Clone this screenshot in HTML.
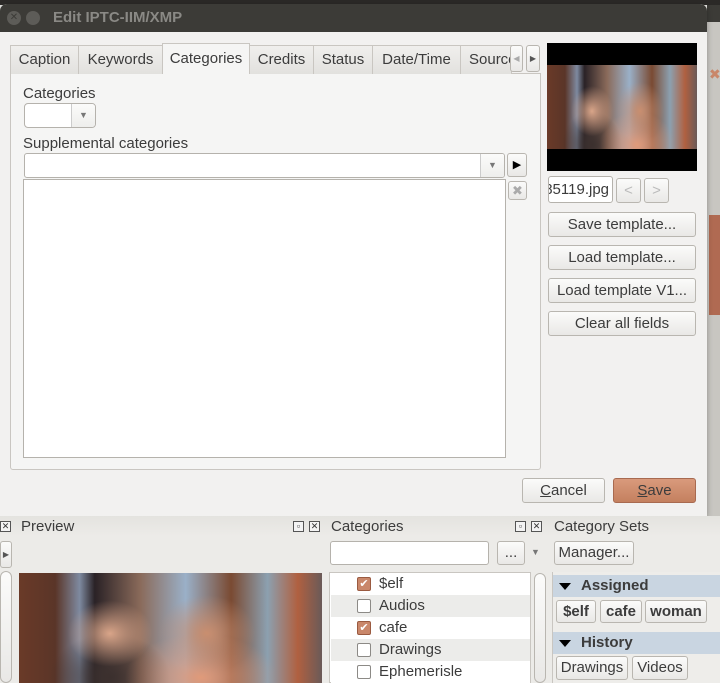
<!DOCTYPE html>
<html><head><style>
*{box-sizing:border-box;margin:0;padding:0}
body{width:720px;height:683px;overflow:hidden;background:#e6e5e1;font-family:"Liberation Sans","DejaVu Sans",sans-serif;font-size:15px;color:#3c3c3c;position:relative}
.a{position:absolute}
.btn{position:absolute;border:1px solid #b9b6b0;border-radius:3px;background:linear-gradient(#fbfbfa,#e9e8e6);text-align:center;font-size:15px;color:#3c3c3c}
.tab{position:absolute;top:45px;height:29px;border:1px solid #c9c6c1;border-bottom:none;background:linear-gradient(#f0efed,#e2e1de);font-size:15px;line-height:28px;text-align:center;color:#3c3c3c;overflow:hidden;white-space:nowrap}
.field{position:absolute;background:#fff;border:1px solid #b5b2ac;border-radius:3px;overflow:hidden}
.photo{background:
radial-gradient(ellipse 14% 30% at 30% 55%,#d9a589,transparent),
radial-gradient(ellipse 16% 35% at 62% 55%,#c98e6f,transparent),
radial-gradient(ellipse 25% 40% at 60% 95%,#e09a7a,transparent),
radial-gradient(ellipse 20% 40% at 30% 95%,#3b302e,transparent),
linear-gradient(90deg,#6a3a28 0%,#5a3528 12%,#7e8aa0 20%,#2a2226 25%,#8a6a5a 40%,#9ab0c8 55%,#7a4a32 70%,#8ca0b0 82%,#b06040 92%,#6a5a58 100%)}
.row{position:absolute;left:331px;width:199px;height:22px;font-size:15px;line-height:22px;padding-left:48px}
.cb{position:absolute;left:26px;top:4px;width:14px;height:14px;border:1px solid #8c8a86;border-radius:2px;background:#fff}
.cb.on{background:#c9876a;border-color:#9a5a40;color:#fff;font-size:11px;line-height:12px;text-align:center}
.chip{position:absolute;border:1px solid #b9b6b0;border-radius:3px;background:linear-gradient(#fbfbfa,#e9e8e6);font-size:15px;text-align:center;line-height:21px}
.sec{position:absolute;left:553px;width:167px;height:22px;background:#c9d5e1;font-weight:bold;font-size:15px;line-height:22px;padding-left:28px}
.sec:before{content:"";position:absolute;left:6px;top:8px;border-left:6px solid transparent;border-right:6px solid transparent;border-top:7px solid #000}
.ic{position:absolute;width:11px;height:11px;border:1px solid #555;font-size:9px;line-height:9px;text-align:center;color:#333;background:#f3f3f3}
</style></head><body>
<div class="a" style="left:0;top:0;width:720px;height:5px;background:#2b2927"></div>
<div class="a" style="left:707px;top:5px;width:13px;height:515px;background:#c8c6c1"></div>
<div class="a" style="left:707px;top:5px;width:13px;height:17px;background:#3c3b37"></div>
<div class="a" style="left:709px;top:66px;color:#c9876a;font-size:14px;font-weight:bold">✖</div>
<div class="a" style="left:709px;top:215px;width:11px;height:100px;background:#b06a52"></div>
<div class="a" style="left:0;top:4px;width:707px;height:512px;background:#f2f1f0;border-radius:7px 7px 0 0;overflow:hidden;box-shadow:0 2px 6px rgba(0,0,0,.3)">
 <div class="a" style="left:0;top:0;width:707px;height:28px;background:#3c3b37"></div>
 <div class="a" style="left:7px;top:7px;width:14px;height:14px;border-radius:50%;background:#5d5c58;color:#3c3b37;font-size:10px;line-height:14px;text-align:center">✕</div>
 <div class="a" style="left:26px;top:7px;width:14px;height:14px;border-radius:50%;background:#5d5c58"></div>
 <div class="a" style="left:53px;top:5px;color:#8a8985;font-weight:bold;font-size:15px">Edit IPTC-IIM/XMP</div>
</div>
<div class="a" style="left:10px;top:73px;width:531px;height:397px;background:#f5f5f4;border:1px solid #c9c6c1;border-radius:0 0 3px 3px"></div>
<div class="tab" style="left:10px;width:69px">Caption</div>
<div class="tab" style="left:78px;width:85px">Keywords</div>
<div class="tab" style="left:249px;width:65px">Credits</div>
<div class="tab" style="left:313px;width:60px">Status</div>
<div class="tab" style="left:372px;width:89px">Date/Time</div>
<div class="tab" style="left:460px;width:52px;text-align:left;padding-left:8px">Source</div>
<div class="tab" style="left:162px;top:43px;height:31px;width:88px;background:#f5f5f4;line-height:29px">Categories</div>
<div class="btn" style="left:510px;top:45px;width:13px;height:27px;font-size:8px;line-height:26px;color:#aaa">◀</div>
<div class="btn" style="left:526px;top:45px;width:14px;height:27px;font-size:8px;line-height:26px;color:#555">▶</div>
<div class="a" style="left:23px;top:85px">Categories</div>
<div class="field" style="left:24px;top:103px;width:72px;height:25px;border-radius:4px"><div class="a" style="left:46px;top:0;width:24px;height:23px;border-left:1px solid #ccc;background:linear-gradient(#fbfbfa,#eeeeec);font-size:9px;line-height:23px;text-align:center;color:#777">▼</div></div>
<div class="a" style="left:23px;top:135px">Supplemental categories</div>
<div class="field" style="left:24px;top:153px;width:481px;height:25px"><div class="a" style="left:455px;top:0;width:24px;height:23px;border-left:1px solid #ccc;background:linear-gradient(#fbfbfa,#eeeeec);font-size:9px;line-height:23px;text-align:center;color:#777">▼</div></div>
<div class="btn" style="left:507px;top:153px;width:20px;height:24px;font-size:11px;line-height:22px;color:#000">▶</div>
<div class="field" style="left:23px;top:179px;width:483px;height:279px;border-radius:0"></div>
<div class="btn" style="left:508px;top:181px;width:19px;height:19px;font-size:13px;line-height:17px;color:#aaa">✖</div>
<div class="a" style="left:547px;top:43px;width:150px;height:128px;background:#000"></div>
<div class="a photo" style="left:547px;top:65px;width:150px;height:84px"></div>
<div class="field" style="left:548px;top:176px;width:65px;height:27px;font-size:15px;line-height:25px"><span class="a" style="right:3px;top:0;white-space:nowrap">3_185119.jpg</span></div>
<div class="btn" style="left:616px;top:178px;width:25px;height:25px;line-height:23px;color:#bbb">&lt;</div>
<div class="btn" style="left:644px;top:178px;width:25px;height:25px;line-height:23px;color:#bbb">&gt;</div>
<div class="btn" style="left:548px;top:212px;width:148px;height:25px;line-height:23px">Save template...</div>
<div class="btn" style="left:548px;top:245px;width:148px;height:25px;line-height:23px">Load template...</div>
<div class="btn" style="left:548px;top:278px;width:148px;height:25px;line-height:23px">Load template V1...</div>
<div class="btn" style="left:548px;top:311px;width:148px;height:25px;line-height:23px">Clear all fields</div>
<div class="btn" style="left:522px;top:478px;width:83px;height:25px;line-height:23px"><u>C</u>ancel</div>
<div class="btn" style="left:613px;top:478px;width:83px;height:25px;line-height:23px;background:linear-gradient(#d99a7c,#c4805f);border-color:#a86a50"><u>S</u>ave</div>
<div class="a" style="left:0;top:516px;width:720px;height:167px;background:linear-gradient(#e4e3df,#ecebe8 20px)"></div>
<div class="ic" style="left:0;top:521px">✕</div>
<div class="a" style="left:21px;top:518px;font-size:15px">Preview</div>
<div class="ic" style="left:293px;top:521px">▫</div>
<div class="ic" style="left:309px;top:521px">✕</div>
<div class="btn" style="left:0;top:541px;width:12px;height:27px;font-size:8px;line-height:25px;color:#555">▶</div>
<div class="btn" style="left:0;top:571px;width:12px;height:112px;border-radius:6px"></div>
<div class="a photo" style="left:19px;top:573px;width:303px;height:110px"></div>
<div class="a" style="left:331px;top:518px;font-size:15px">Categories</div>
<div class="ic" style="left:515px;top:521px">▫</div>
<div class="ic" style="left:531px;top:521px">✕</div>
<div class="field" style="left:330px;top:541px;width:159px;height:24px"></div>
<div class="btn" style="left:497px;top:541px;width:28px;height:24px;line-height:22px">...</div>
<div class="a" style="left:531px;top:547px;font-size:9px;color:#777">▼</div>
<div class="a" style="left:329px;top:572px;width:202px;height:111px;border:1px solid #c9c6c1;background:#fff"></div>
<div class="row" style="top:573px;background:#fff"><span class="cb on">✔</span>$elf</div>
<div class="row" style="top:595px;background:#ececea"><span class="cb"></span>Audios</div>
<div class="row" style="top:617px;background:#fff"><span class="cb on">✔</span>cafe</div>
<div class="row" style="top:639px;background:#ececea"><span class="cb"></span>Drawings</div>
<div class="row" style="top:661px;background:#fff"><span class="cb"></span>Ephemerisle</div>
<div class="btn" style="left:534px;top:573px;width:12px;height:110px;border-radius:6px"></div>
<div class="a" style="left:554px;top:518px;font-size:15px">Category Sets</div>
<div class="btn" style="left:554px;top:541px;width:80px;height:24px;line-height:22px">Manager...</div>
<div class="a" style="left:552px;top:572px;width:168px;height:111px;background:#eeedea;border-left:1px solid #c9c6c1"></div>
<div class="sec" style="top:575px">Assigned</div>
<div class="chip" style="left:556px;top:600px;width:40px;height:23px;font-weight:bold">$elf</div>
<div class="chip" style="left:600px;top:600px;width:42px;height:23px;font-weight:bold">cafe</div>
<div class="chip" style="left:645px;top:600px;width:62px;height:23px;font-weight:bold">woman</div>
<div class="sec" style="top:632px">History</div>
<div class="chip" style="left:556px;top:656px;width:72px;height:24px">Drawings</div>
<div class="chip" style="left:632px;top:656px;width:56px;height:24px">Videos</div>
</body></html>
